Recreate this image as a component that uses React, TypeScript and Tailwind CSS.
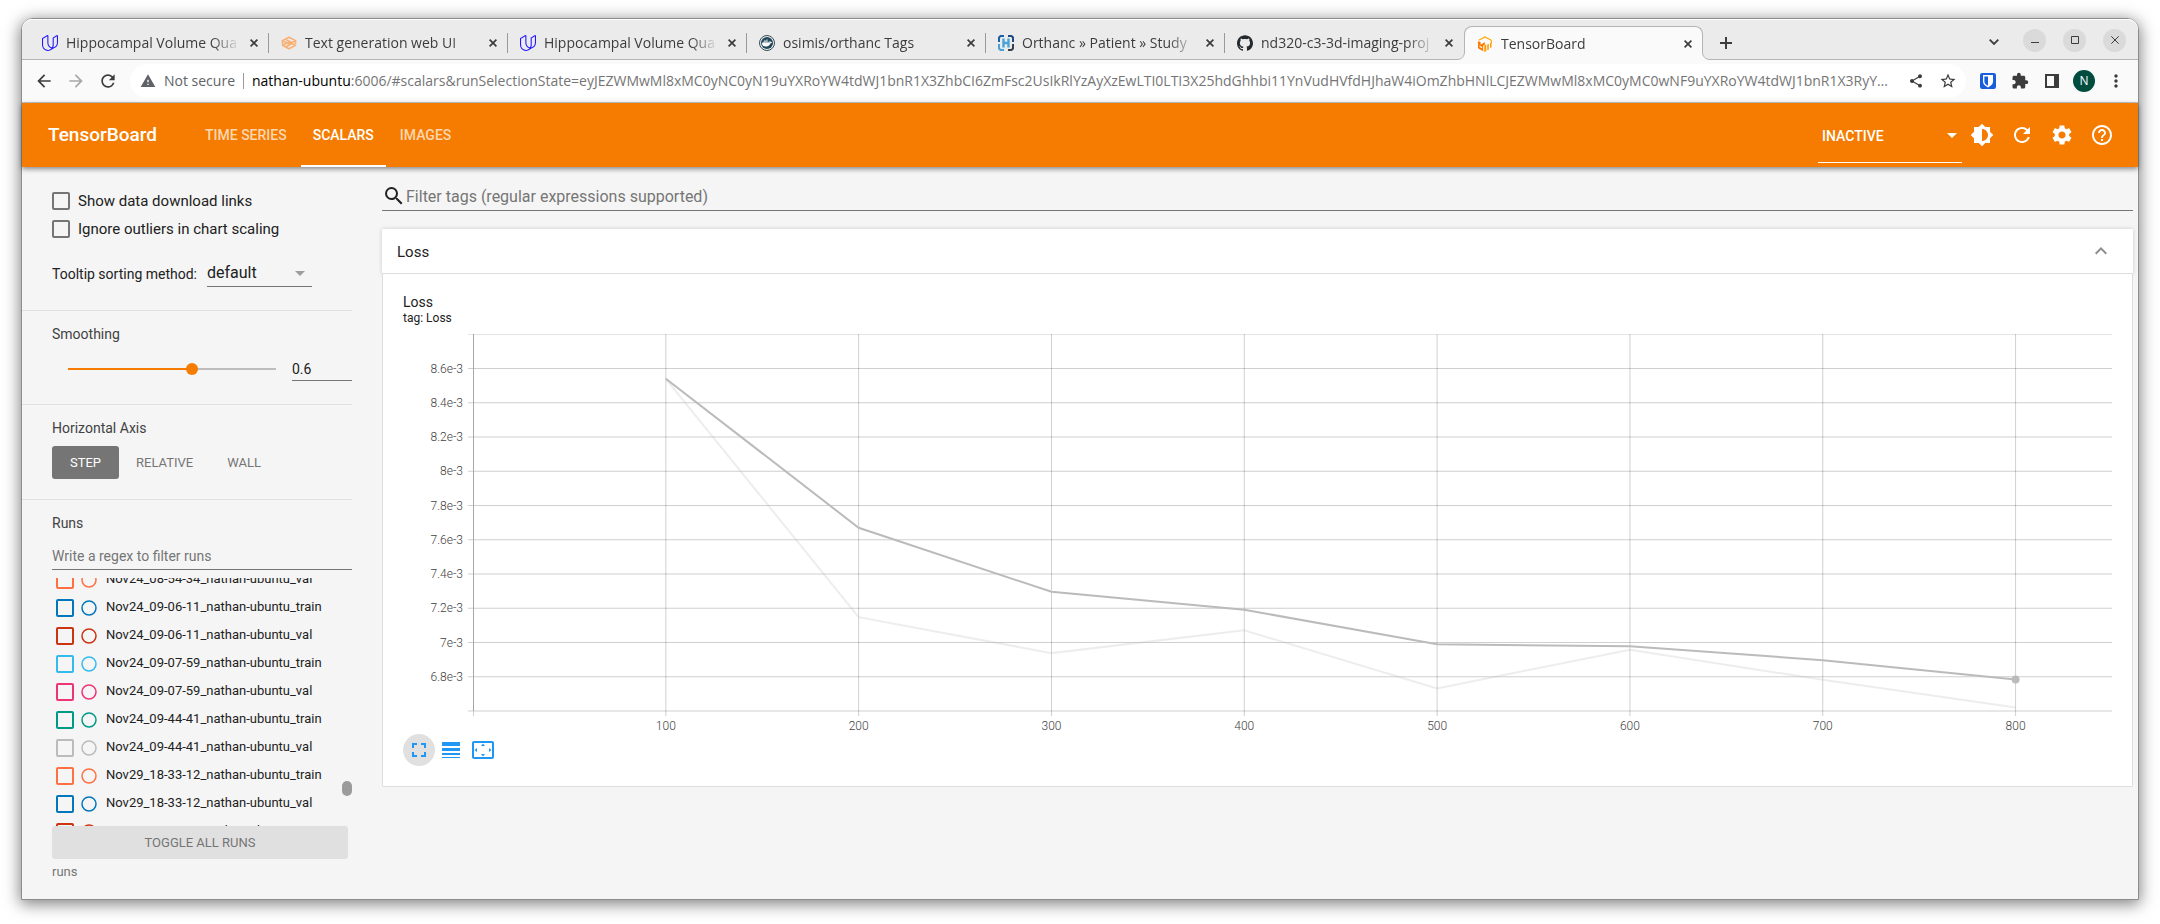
import { useEffect, useRef, useState } from "react";
import type { ReactNode } from "react";
import {
  MdArrowBack,
  MdArrowDropDown,
  MdArrowForward,
  MdBrightness6,
  MdExtension,
  MdFullscreen,
  MdHelpOutline,
  MdKeyboardArrowUp,
  MdLineWeight,
  MdMoreVert,
  MdRefresh,
  MdSearch,
  MdSettings,
  MdSettingsOverscan,
  MdShare,
  MdStarBorder,
  MdWarning,
} from "react-icons/md";
import { SiUdacity, SiGithub, SiDocker } from "react-icons/si";

function GradioLogo() {
  return (
    <svg viewBox="0 0 16 16" className="size-4" fill="none" stroke="#f9b072" strokeWidth="1.6" strokeLinejoin="round">
      <path d="M1.5 5.6 8 2.2l6.5 3.4L8 9z" />
      <path d="M1.5 10.4 8 7l6.5 3.4L8 13.8z" />
      <path d="M5 4.6l6 3.2M11 8.6l-6 3.2" />
      <path d="M1.5 5.6v3.2l2.4 1.3M14.5 5.6v3.4" />
    </svg>
  );
}

function DockerBadge() {
  return (
    <span className="flex size-4 items-center justify-center rounded-full border border-[#394d54] bg-[#e8eef0]">
      <span className="flex size-3 items-center justify-center rounded-full bg-[#24475c]">
        <SiDocker className="size-2.5 text-white" />
      </span>
    </span>
  );
}

function OrthancLogo() {
  return (
    <svg viewBox="0 0 16 16" className="size-4" fill="none" strokeWidth="2">
      <path d="M6 1H2.5L1 2.5V7" stroke="#1b61a5" />
      <path d="M10 1h3.500L15 2.500V7" stroke="#1b4c85" />
      <path d="M1 9v4.500L2.500 15H6" stroke="#4aa3d8" />
      <path d="M10 15h3.500L15 13.500V9" stroke="#3a4148" />
      <path d="M5.500 3.500v9M10.500 3.500v9M5.500 8h5" stroke="#4aa3d8" strokeWidth="2.400" />
    </svg>
  );
}

function TensorBoardLogo() {
  return (
    <svg viewBox="0 0 16 16" className="size-4" fill="none">
      <path d="M1.700 4.300 8 .9l6.300 3.400v3" stroke="#ffa800" strokeWidth="1.200" />
      <path d="M1 5l2.600 1.200v2.200L8 6.200v2.400l-1.800 1v5.700L1 12.200z" fill="#ff7a00" />
      <path d="M2.600 9.600l2.600 1.400v1.200l-2.600-1.300z" fill="#fafafa" />
      <path d="M7.300 9.600l2-1v6.600l-2 .9zM10.300 8.600l1.500-.8v5.600l-1.500.8zM13 7.300l1.500-.8v4.800l-1.500.8z" fill="#ff9a00" />
    </svg>
  );
}

function BitwardenLogo() {
  return (
    <svg viewBox="0 0 16 16" className="size-4">
      <rect width="16" height="16" rx="2.200" fill="#175ddc" />
      <path d="M3 2h10v6.500c0 2.800-2.300 4.600-5 5.900-2.700-1.300-5-3.100-5-5.900z" fill="#fff" />
      <path d="M4.400 3.400H8v9.400c-2-1.100-3.600-2.400-3.600-4.300z" fill="#175ddc" />
    </svg>
  );
}

function SidePanelIcon() {
  return (
    <svg viewBox="0 0 14 14" className="size-3.5" fill="#3c3c3c">
      <path d="M0 0h14v14H0zM2 2v10h7V2z" fillRule="evenodd" />
    </svg>
  );
}

function CloseIcon() {
  return (
    <svg viewBox="0 0 8 8" className="size-2" stroke="#3c3c3c" strokeWidth="1.700" fill="none">
      <path d="M.6.6l6.800 6.800M7.400.6.6 7.400" />
    </svg>
  );
}

type Tab = { title: string; icon: ReactNode };

const udacity = <SiUdacity className="size-4 text-[#2015ff]" />;

const tabs: Tab[] = [
  { title: "Hippocampal Volume Qua", icon: udacity },
  { title: "Text generation web UI", icon: <GradioLogo /> },
  { title: "Hippocampal Volume Qua", icon: udacity },
  { title: "osimis/orthanc Tags", icon: <DockerBadge /> },
  { title: "Orthanc » Patient » Study", icon: <OrthancLogo /> },
  { title: "nd320-c3-3d-imaging-proj", icon: <SiGithub className="size-4 text-[#24292f]" /> },
];

function TabBody({ tab }: { tab: Tab }) {
  return (
    <>
      <span className="shrink-0">{tab.icon}</span>
      <span className="flex-1 overflow-hidden text-sm leading-5 whitespace-nowrap text-[#3c3c3c] [mask-image:linear-gradient(to_right,black_calc(100%-28px),transparent)]">
        {tab.title}
      </span>
      <button aria-label={`Close ${tab.title}`} className="flex size-3 shrink-0 items-center justify-center">
        <CloseIcon />
      </button>
    </>
  );
}

function TabStrip() {
  return (
    <div className="flex h-[41px] items-end rounded-t-[10px] border-b border-[#b4b4b4] bg-[#ebebeb] pl-2 shadow-[inset_0_1px_0_#fff]">
      {tabs.map((tab, i) => (
        <div key={i} className="flex h-[33px] w-[239px] min-w-0 items-center gap-2 pl-3">
          <TabBody tab={tab} />
          <span className={i === tabs.length - 1 ? "w-px" : "h-5 w-px bg-[#9a9a9a]"} />
        </div>
      ))}
      <div className="relative z-10 -mb-px flex h-[34px] w-[239px] min-w-0 items-center gap-2 rounded-t-lg border border-b-0 border-[#b4b4b4] bg-[#fafafa] pr-2 pl-3">
        <svg viewBox="0 0 8 8" className="absolute bottom-0 -left-2 size-2" fill="none">
          <path d="M8 0v8H0v-.5c4.500 0 7.500-3 7.500-7.500z" fill="#fafafa" />
          <path d="M0 7.500C4.500 7.500 7.500 4.500 7.500 0" stroke="#b4b4b4" />
        </svg>
        <TabBody tab={{ title: "TensorBoard", icon: <TensorBoardLogo /> }} />
        <svg viewBox="0 0 8 8" className="absolute -right-2 bottom-0 size-2" fill="none">
          <path d="M0 0v8h8v-.5C3.500 7.500.5 4.500.5 0z" fill="#fafafa" />
          <path d="M8 7.500C3.500 7.500.5 4.500.5 0" stroke="#b4b4b4" />
        </svg>
      </div>
      <button aria-label="New tab" className="ml-[11px] flex h-[33px] w-6 items-center justify-center">
        <svg viewBox="0 0 12 12" className="size-3" stroke="#3c3c3c" strokeWidth="2">
          <path d="M6 0v12M0 6h12" />
        </svg>
      </button>
      <div className="ml-auto flex h-full items-center gap-[17px] pt-0.5 pr-3">
        <button aria-label="Search tabs" className="mt-1 flex size-6 items-center justify-center">
          <svg viewBox="0 0 10 6" className="h-1.5 w-2.5" fill="none" stroke="#3c3c3c" strokeWidth="1.800">
            <path d="M.7.7 5 5 9.300.7" />
          </svg>
        </button>
        <button aria-label="Minimize" className="flex size-[23px] items-center justify-center rounded-full bg-[#dadada]">
          <svg viewBox="0 0 8 8" className="size-2" stroke="#3c3c3c">
            <path d="M0 6.500h8" />
          </svg>
        </button>
        <button aria-label="Maximize" className="flex size-[23px] items-center justify-center rounded-full bg-[#dadada]">
          <svg viewBox="0 0 8 8" className="size-2" stroke="#3c3c3c" fill="none">
            <path d="M.5.5h7v7h-7z" />
          </svg>
        </button>
        <button aria-label="Close window" className="flex size-[23px] items-center justify-center rounded-full bg-[#dadada]">
          <svg viewBox="0 0 8 8" className="size-2" stroke="#3c3c3c">
            <path d="M.3.3l7.400 7.400M7.700.3.3 7.700" />
          </svg>
        </button>
      </div>
    </div>
  );
}

function ToolButton({ label, children }: { label: string; children: ReactNode }) {
  return (
    <button aria-label={label} className="flex h-8 w-8 shrink-0 items-center justify-center text-[#3c3c3c]">
      {children}
    </button>
  );
}

function Toolbar() {
  return (
    <div className="flex h-[43px] items-center border-b border-[#c4c4c4] bg-[#fafafa] px-1.5">
      <ToolButton label="Back"><MdArrowBack className="size-5" /></ToolButton>
      <ToolButton label="Forward"><MdArrowForward className="size-5 text-[#a8a8a8]" /></ToolButton>
      <ToolButton label="Reload"><MdRefresh className="size-5" /></ToolButton>
      <div className="mx-1.5 flex h-[34px] min-w-0 flex-1 items-center rounded-full bg-white pr-0.5 pl-[10px]">
        <MdWarning className="size-4 shrink-0 text-[#5f6368]" />
        <span className="ml-2 shrink-0 text-sm text-[#5f6368]">Not secure</span>
        <span className="mx-2 h-4 w-px shrink-0 bg-[#9a9a9a]" />
        <span className="min-w-0 flex-1 overflow-hidden text-sm whitespace-nowrap text-[#757575]">
          <span className="text-black">nathan-ubuntu</span>
          :6006/#scalars&amp;runSelectionState=eyJEZWMwMl8xMC0yNC0yN19uYXRoYW4tdWJ1bnR1X3ZhbCI6ZmFsc2UsIkRlYzAyXzEwLTI0LTI3X25hdGhhbi11YnVudHVfdHJhaW4iOmZhbHNlLCJEZWMwMl8xMC0yMC0wNF9uYXRoYW4tdWJ1bnR1X3RyY…
        </span>
        <ToolButton label="Share"><MdShare className="size-4" /></ToolButton>
        <ToolButton label="Bookmark"><MdStarBorder className="size-[18px]" /></ToolButton>
      </div>
      <ToolButton label="Bitwarden"><BitwardenLogo /></ToolButton>
      <ToolButton label="Extensions"><MdExtension className="size-[18px]" /></ToolButton>
      <ToolButton label="Side panel"><SidePanelIcon /></ToolButton>
      <ToolButton label="Profile">
        <span className="flex size-[22px] items-center justify-center rounded-full bg-[#004d40] text-xs text-white">N</span>
      </ToolButton>
      <ToolButton label="Menu"><MdMoreVert className="size-5" /></ToolButton>
    </div>
  );
}

function AppHeader() {
  return (
    <header className="relative z-10 flex h-16 items-center bg-[#f57c00] pr-4 pl-[26px] text-white shadow-[0_2px_5px_rgba(0,0,0,0.45)]">
      <h1 className="text-[19px] font-medium">TensorBoard</h1>
      <nav className="ml-9 flex h-full gap-0.5 text-sm font-medium">
        <a href="#timeseries" className="flex items-center px-3 text-white/70">TIME SERIES</a>
        <a href="#scalars" className="flex items-center border-b-2 border-white px-3 pt-0.5">SCALARS</a>
        <a href="#images" className="flex items-center px-3 text-white/70">IMAGES</a>
      </nav>
      <div className="relative ml-auto flex h-full w-36 items-center">
        <select aria-label="Inactive dashboards" className="mt-2 h-12 w-full appearance-none border-b border-white pb-1.5 pl-1 text-sm font-medium outline-none">
          <option>INACTIVE</option>
        </select>
        <MdArrowDropDown className="pointer-events-none absolute top-5 -right-0.5 size-6" />
      </div>
      <button aria-label="Toggle theme" className="flex size-10 items-center justify-center"><MdBrightness6 className="size-6" /></button>
      <button aria-label="Refresh" className="flex size-10 items-center justify-center"><MdRefresh className="size-6" /></button>
      <button aria-label="Settings" className="flex size-10 items-center justify-center"><MdSettings className="size-6" /></button>
      <button aria-label="Help" className="flex size-10 items-center justify-center"><MdHelpOutline className="size-6" /></button>
    </header>
  );
}

const runs = [
  { name: "Nov24_08-54-34_nathan-ubuntu_val", color: "#ff7043" },
  { name: "Nov24_09-06-11_nathan-ubuntu_train", color: "#0077bb" },
  { name: "Nov24_09-06-11_nathan-ubuntu_val", color: "#cc3311" },
  { name: "Nov24_09-07-59_nathan-ubuntu_train", color: "#33bbee" },
  { name: "Nov24_09-07-59_nathan-ubuntu_val", color: "#ee3377" },
  { name: "Nov24_09-44-41_nathan-ubuntu_train", color: "#009988" },
  { name: "Nov24_09-44-41_nathan-ubuntu_val", color: "#bbbbbb" },
  { name: "Nov29_18-33-12_nathan-ubuntu_train", color: "#ff7043" },
  { name: "Nov29_18-33-12_nathan-ubuntu_val", color: "#0077bb" },
  { name: "Nov29_18-35-47_nathan-ubuntu_train", color: "#cc3311" },
];

function Option({ label }: { label: string }) {
  return (
    <label className="flex h-7 items-center gap-2 text-[15px] text-[#212121]">
      <input type="checkbox" className="size-[18px] appearance-none rounded-xs border-2 border-[#757575]" />
      {label}
    </label>
  );
}

function Sidebar() {
  const [smoothing, setSmoothing] = useState("0.6");
  return (
    <aside className="w-[330px] shrink-0">
      <section className="border-b border-[#e0e0e0] pt-5 pb-[23px] pl-[30px]">
        <Option label="Show data download links" />
        <Option label="Ignore outliers in chart scaling" />
        <div className="mt-3 flex items-center gap-[10px]">
          <label htmlFor="sorting" className="pt-1.5 text-sm text-[#212121]">Tooltip sorting method:</label>
          <span className="relative">
            <select id="sorting" className="block h-8 w-[105px] appearance-none border-b border-[#757575] pt-1 text-base text-[#212121] outline-none">
              <option>default</option>
            </select>
            <MdArrowDropDown className="pointer-events-none absolute top-1.5 right-0 size-6 text-[#9e9e9e]" />
          </span>
        </div>
      </section>
      <section className="border-b border-[#e0e0e0] pt-[13px] pb-[23px] pl-[30px] text-sm">
        <h3 className="text-[#424242]">Smoothing</h3>
        <div className="mt-[13px] flex items-center gap-4 pl-4">
          <input
            type="range"
            aria-label="Smoothing"
            min="0"
            max="1"
            step="0.001"
            value={smoothing}
            onChange={(e) => setSmoothing(e.target.value)}
            className="h-3 min-w-0 flex-1 appearance-none bg-transparent bg-[linear-gradient(to_right,#f57c00_60%,#bdbdbd_60%)] bg-[length:100%_2px] bg-center bg-no-repeat [&::-webkit-slider-thumb]:size-3 [&::-webkit-slider-thumb]:appearance-none [&::-webkit-slider-thumb]:rounded-full [&::-webkit-slider-thumb]:bg-[#f57c00]"
          />
          <input
            aria-label="Smoothing value"
            value={smoothing}
            onChange={(e) => setSmoothing(e.target.value)}
            className="h-6 w-[60px] border-b border-[#757575] text-[#212121] outline-none"
          />
        </div>
      </section>
      <section className="border-b border-[#e0e0e0] pt-[13px] pb-5 pl-[30px] text-sm">
        <h3 className="text-[#424242]">Horizontal Axis</h3>
        <div className="mt-2 flex text-[13px] text-[#757575]">
          <button className="h-[33px] rounded-[3px] bg-[#757575] px-[18px] pt-0.5 text-white">STEP</button>
          <button className="h-[33px] px-[17px] pt-0.5">RELATIVE</button>
          <button className="h-[33px] px-[17px] pt-0.5">WALL</button>
        </div>
      </section>
      <section className="pt-[13px] pl-[30px] text-sm">
        <h3 className="text-[#424242]">Runs</h3>
        <input
          aria-label="Filter runs"
          placeholder="Write a regex to filter runs"
          className="mt-[7px] block h-[30px] w-full border-b border-[#757575] pt-0.5 outline-none placeholder:text-[#757575]"
        />
        <div className="relative mt-2 h-62 overflow-hidden">
          <ul className="-mt-3">
            {runs.map((run) => (
              <li key={run.name} className="flex h-7 items-center pl-1">
                <label className="flex items-center text-[13px] text-[#212121]">
                  <input
                    type="checkbox"
                    style={{ borderColor: run.color }}
                    className="mr-[7px] size-[18px] appearance-none rounded-xs border-2"
                  />
                  <svg viewBox="0 0 16 16" className="mr-[9px] size-4" fill="none" stroke={run.color} strokeWidth="1.500">
                    <circle cx="8" cy="8" r="7" />
                  </svg>
                  <span className="pb-0.5">{run.name}</span>
                </label>
              </li>
            ))}
          </ul>
          <span className="absolute right-0 bottom-[30px] h-[15px] w-[10px] rounded-full bg-[#9b9b9b]" />
        </div>
        <button className="mr-1 block h-[33px] w-74 rounded-[3px] bg-[#e0e0e0] pt-0.5 text-[13px] text-[#757575]">TOGGLE ALL RUNS</button>
        <p className="mt-[3px] pb-4 text-[13px] leading-5 text-[#757575]">runs</p>
      </section>
    </aside>
  );
}

const yTicks = ["", "8.6e-3", "8.4e-3", "8.2e-3", "8e-3", "7.8e-3", "7.6e-3", "7.4e-3", "7.2e-3", "7e-3", "6.8e-3", ""];
const smoothed = [8.54, 7.67, 7.296, 7.191, 6.99, 6.978, 6.897, 6.784];
const raw = [8.54, 7.148, 6.938, 7.071, 6.732, 6.958, 6.782, 6.62];

function LossChart() {
  const ref = useRef<HTMLDivElement>(null);
  const [width, setWidth] = useState(1709);

  useEffect(() => {
    const el = ref.current;
    if (!el) return;
    const observer = new ResizeObserver(() => setWidth(el.clientWidth));
    observer.observe(el);
    return () => observer.disconnect();
  }, []);

  const left = 70;
  const bottom = 386;
  const x = (step: number) => left + (step / 850) * (width - left);
  const y = (value: number) => bottom - ((value - 6.6) / 0.2) * 34.25;
  const path = (values: number[]) => values.map((v, i) => `${i ? "L" : "M"}${x((i + 1) * 100)} ${y(v)}`).join("");

  return (
    <div ref={ref} className="w-full">
      <svg width={width} height="409" className="block text-xs font-light" fill="none">
        {yTicks.map((label, i) => {
          const py = i === 0 ? 9.5 : y(8.8 - i * 0.2);
          return (
            <g key={i}>
              <path d={`M65 ${py}H${width}`} stroke="#000" strokeOpacity={i === 0 ? 0.1 : 0.19} />
              <text x="60" y={py + 4} textAnchor="end" className="fill-[#424242]">{label}</text>
            </g>
          );
        })}
        {[100, 200, 300, 400, 500, 600, 700, 800].map((step) => (
          <g key={step}>
            <path d={`M${x(step)} 9V391`} stroke="#000" strokeOpacity="0.19" />
            <text x={x(step)} y="405" textAnchor="middle" className="fill-[#424242]">{step}</text>
          </g>
        ))}
        <path d="M70.500 9V386" stroke="#a6a6a6" />
        <path d="M70.500 386v5" stroke="#d0d0d0" />
        <path d={path(raw)} stroke="#bbbbbb" strokeOpacity="0.27" strokeWidth="2" />
        <path d={path(smoothed)} stroke="#bbbbbb" strokeWidth="2" />
        <circle cx={x(800)} cy={y(6.784)} r="4" fill="#bbbbbb" />
      </svg>
    </div>
  );
}

function Main() {
  return (
    <main className="ml-[30px] min-w-0 flex-1 pt-[14px] pr-[5px]">
      <div className="flex h-[30px] items-center border-b border-[#757575]">
        <MdSearch className="size-6 shrink-0 text-[#212121]" />
        <input
          aria-label="Filter tags"
          placeholder="Filter tags (regular expressions supported)"
          className="min-w-0 flex-1 pt-0.5 text-base outline-none placeholder:text-[#757575]"
        />
      </div>
      <button className="mt-[18px] flex h-[45px] w-full items-center justify-between border-b border-[#dddddd] bg-white pr-5 pl-[15px] text-[15px] text-[#212121] shadow-[0_0_4px_rgba(0,0,0,0.18)]">
        <span className="pt-0.5">Loss</span>
        <MdKeyboardArrowUp className="size-6 text-[#8c8c8c]" />
      </button>
      <section className="relative rounded-b-xs border border-t-0 border-[#dddddd] bg-white px-5 pt-[19px] pb-5">
        <h2 className="text-sm leading-[18px] text-[#212121]">Loss</h2>
        <p className="text-xs leading-[14px] text-[#212121]">tag: Loss</p>
        <LossChart />
        <div className="flex text-[#2196f3]">
          <button aria-label="Toggle full size" className="flex size-8 items-center justify-center rounded-full bg-[#e0e0e0]">
            <MdFullscreen className="size-6" />
          </button>
          <button aria-label="Toggle log scale" className="flex size-8 items-center justify-center"><MdLineWeight className="size-6" /></button>
          <button aria-label="Fit domain to data" className="flex size-8 items-center justify-center"><MdSettingsOverscan className="size-6" /></button>
        </div>
      </section>
    </main>
  );
}

export default function App() {
  return (
    <div className="flex min-h-screen flex-col bg-white px-[21px] pt-[18px] pb-6 font-['Open_Sans','Noto_Sans',sans-serif]">
      <div className="flex flex-1 flex-col rounded-t-[12px] border border-[#8c8c8c] bg-[#f5f5f5] shadow-[0_3px_16px_1px_rgba(0,0,0,0.5)]">
        <TabStrip />
        <Toolbar />
        <div className="flex flex-1 flex-col font-[Roboto,sans-serif]">
          <AppHeader />
          <div className="flex flex-1">
            <Sidebar />
            <Main />
          </div>
        </div>
      </div>
    </div>
  );
}
